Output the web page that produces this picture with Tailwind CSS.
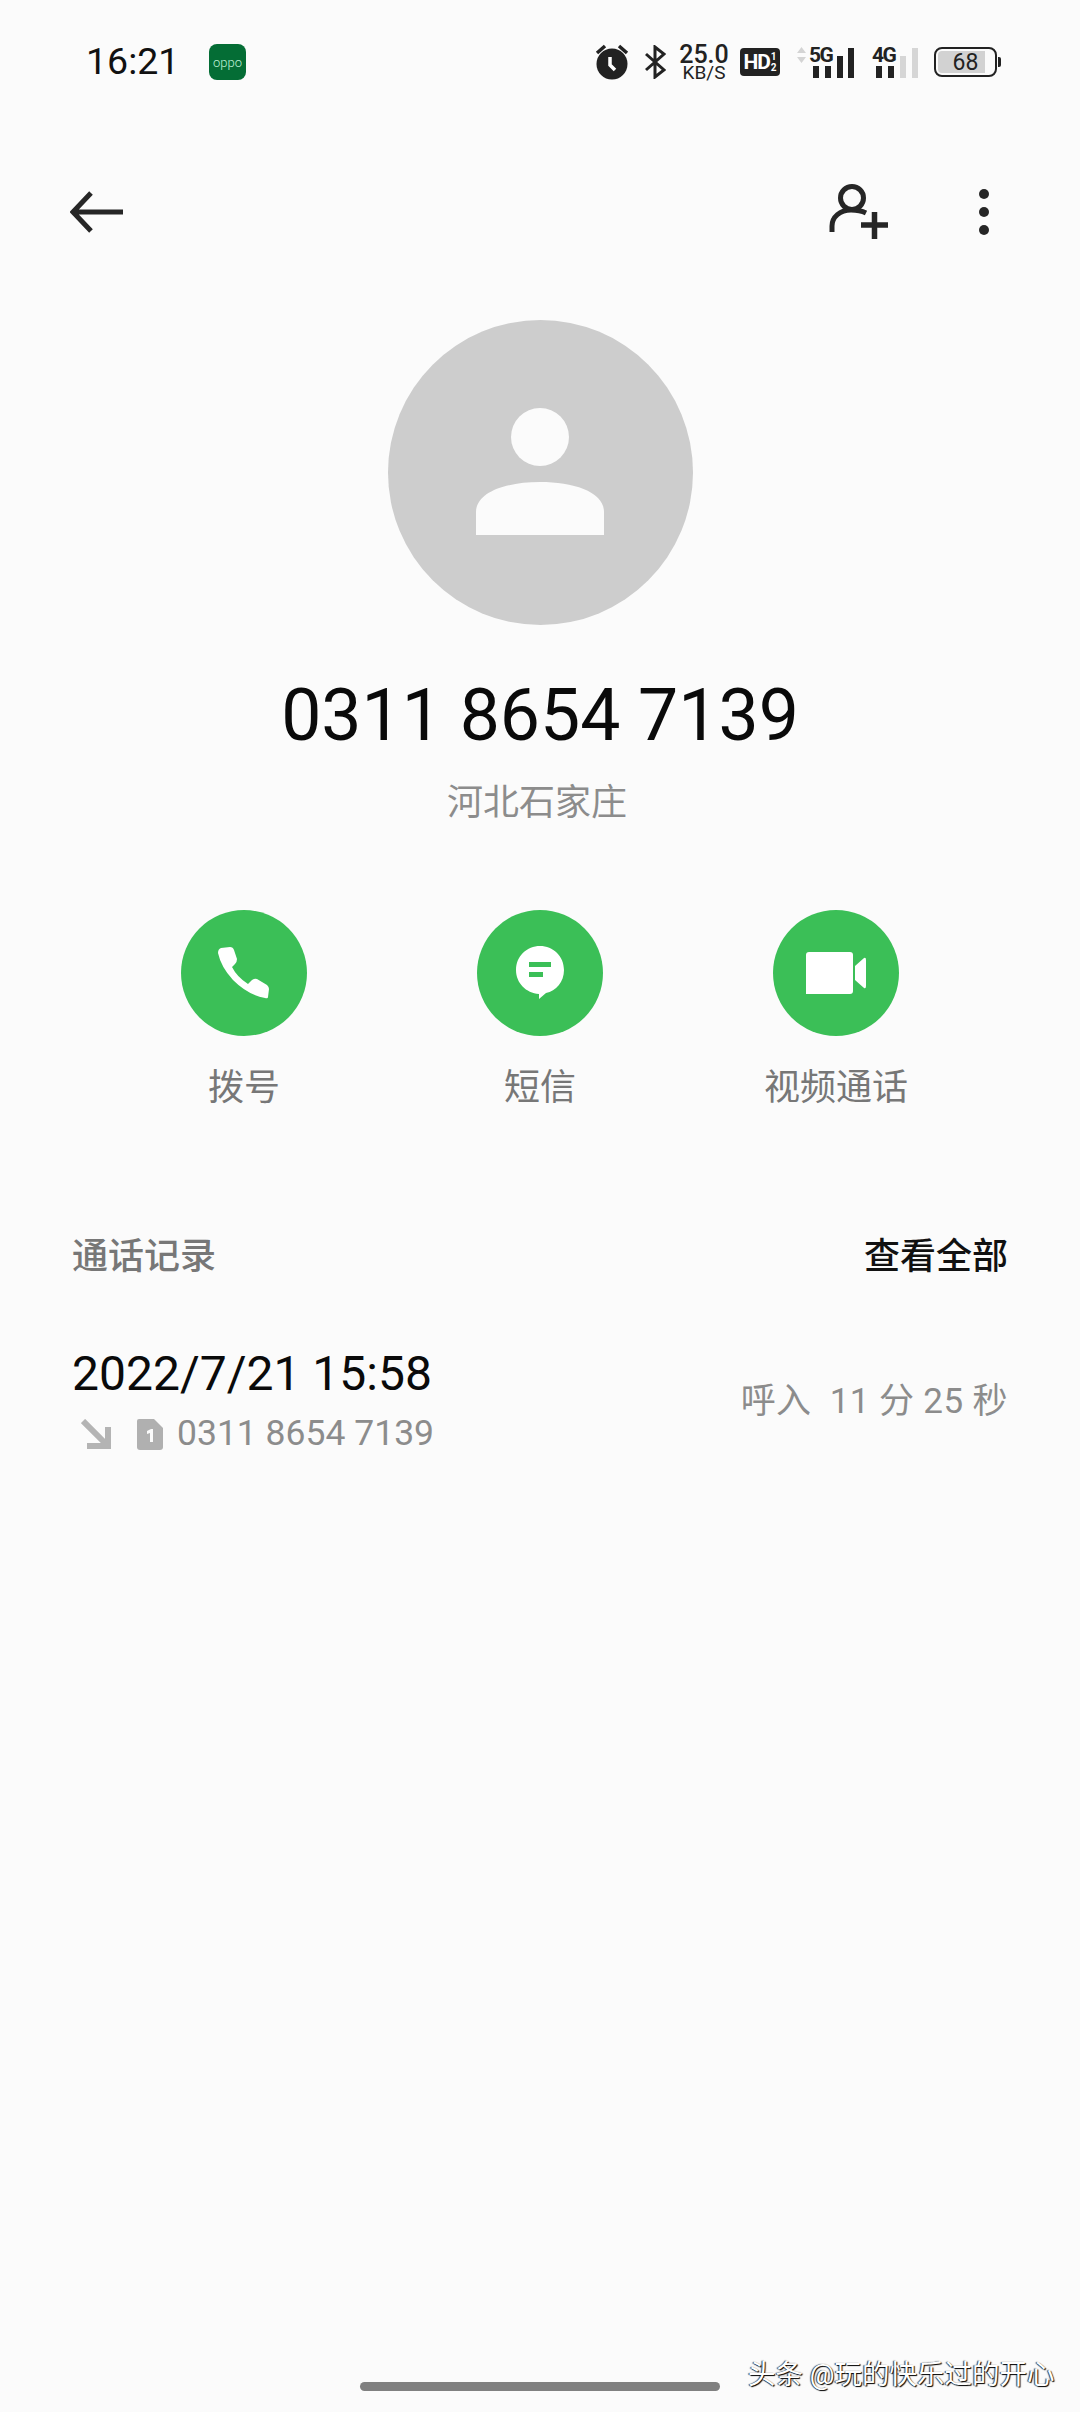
<!DOCTYPE html>
<html lang="zh-CN">
<head>
    <meta charset="UTF-8">
    <meta name="viewport" content="width=device-width, initial-scale=1.0">
    <title>通话详情</title>
    <script src="https://cdn.jsdelivr.net/npm/@tailwindcss/browser@4"></script>
</head>
<body class="bg-[#fbfbfb]">
    <div class="relative w-[1080px] h-[2412px] overflow-hidden bg-[#fbfbfb] font-['Roboto','Noto_Sans_CJK_SC',sans-serif]">
        <!-- Status bar -->
        <div class="flex items-center h-[124px] pl-[86px]">
            <span class="w-[123px] text-[37.500px] leading-none text-[#111]">16:21</span>
            <div class="flex items-center justify-center w-[37px] h-[36px] rounded-[8px] bg-[#046d35] text-[13px] font-light leading-none text-[#bff0d5]">oppo</div>
            <div class="ml-auto flex items-center h-[40px] mr-[79px] text-[#222]">
                <svg class="w-[34px] h-[36px]" viewBox="0 0 34 36">
                    <circle cx="17" cy="20" r="15.5" fill="#222"/>
                    <path d="M2 9l8-7M32 9l-8-7" stroke="#222" stroke-width="3.5" fill="none"/>
                    <path d="M15 13v8l5 5" stroke="#fff" stroke-width="3.5" fill="none"/>
                </svg>
                <svg class="ml-[15px] w-[22px] h-[34px]" viewBox="0 0 22 34">
                    <path d="M2 9l18 16-9 7V2l9 7L2 25" stroke="#222" stroke-width="3" fill="none"/>
                </svg>
                <div class="ml-[13px] flex flex-col items-center w-[50px]">
                    <span class="text-[25px] leading-[21px] font-medium">25.0</span>
                    <span class="text-[19px] leading-[15px]">KB/S</span>
                </div>
                <div class="ml-[11px] flex items-center justify-center w-[40px] h-[28px] rounded-[4px] bg-[#222] text-white">
                    <span class="text-[21px] leading-none font-bold tracking-[-1px]">HD</span>
                    <span class="flex flex-col text-[10px] leading-[11px] font-bold ml-[1px]"><span>1</span><span>2</span></span>
                </div>
                <svg class="ml-[17px] w-[9px] h-[16px] mb-[14px]" viewBox="0 0 9 16">
                    <path d="M4.500 0L9 6H0zM0 10h9l-4.500 6z" fill="#d4d4d4"/>
                </svg>
                <div class="relative ml-[3px] w-[46px] h-[32px]">
                    <span class="absolute left-0 -top-[1px] text-[21px] leading-none font-bold tracking-[-1.500px]">5G</span>
                    <span class="absolute left-[4px] bottom-0 w-[6px] h-[12px] bg-[#222]"></span>
                    <span class="absolute left-[16px] bottom-0 w-[6px] h-[12px] bg-[#222]"></span>
                    <span class="absolute left-[28px] bottom-0 w-[6px] h-[22px] bg-[#222]"></span>
                    <span class="absolute left-[39px] bottom-0 w-[6px] h-[30px] bg-[#222]"></span>
                </div>
                <div class="relative ml-[17px] w-[46px] h-[32px]">
                    <span class="absolute left-0 -top-[1px] text-[21px] leading-none font-bold tracking-[-1.500px]">4G</span>
                    <span class="absolute left-[4px] bottom-0 w-[6px] h-[12px] bg-[#222]"></span>
                    <span class="absolute left-[16px] bottom-0 w-[6px] h-[12px] bg-[#222]"></span>
                    <span class="absolute left-[28px] bottom-0 w-[6px] h-[22px] bg-[#d6d6d6]"></span>
                    <span class="absolute left-[40px] bottom-0 w-[6px] h-[30px] bg-[#d6d6d6]"></span>
                </div>
                <div class="ml-[16px] flex items-center justify-center w-[63px] h-[30px] rounded-[8px] border-[2.500px] border-[#222] p-[2px]">
                    <div class="flex items-center justify-center w-full h-full rounded-[4px] bg-gradient-to-r from-[#d2d2d2] from-[85%] to-transparent to-[85%] text-[23px] leading-none">68</div>
                </div>
                <span class="ml-[1px] w-[3px] h-[10px] bg-[#222] rounded-r-[2px]"></span>
            </div>
        </div>

        <!-- Toolbar -->
        <div class="flex items-center h-[176px] pl-[70px] pr-[91px]">
            <svg class="w-[54px] h-[42px]" viewBox="0 0 54 42">
                <path d="M53 21H3M21 2L3 21l18 19" stroke="#262626" stroke-width="5" fill="none"/>
            </svg>
            <svg class="ml-auto w-[60px] h-[56px]" viewBox="0 0 60 56">
                <circle cx="23" cy="14" r="11.500" stroke="#262626" stroke-width="5" fill="none"/>
                <path d="M3 48V42C3 33 11 26 22 26c6 0 11 1 15 3" stroke="#262626" stroke-width="5" fill="none"/>
                <path d="M32 41H59M45.500 28V55" stroke="#262626" stroke-width="5.500" fill="none"/>
            </svg>
            <div class="ml-[90px] flex flex-col gap-[8px]">
                <span class="w-[10px] h-[10px] rounded-full bg-[#262626]"></span>
                <span class="w-[10px] h-[10px] rounded-full bg-[#262626]"></span>
                <span class="w-[10px] h-[10px] rounded-full bg-[#262626]"></span>
            </div>
        </div>

        <!-- Avatar -->
        <div class="mt-[20px] mx-auto flex flex-col items-center w-[305px] h-[305px] rounded-full bg-[#cdcdcd]">
            <span class="mt-[88px] w-[58px] h-[58px] rounded-full bg-[#fbfbfb]"></span>
            <svg class="mt-[16px] w-[128px] h-[53px]" viewBox="0 0 128 53">
                <path d="M0 53V30C0 10 30 0 64 0s64 10 64 30v23z" fill="#fbfbfb"/>
            </svg>
        </div>

        <!-- Number -->
        <h1 class="mt-[46px] h-[90px] text-center text-[71.500px] leading-[90px] text-[#0a0a0a]">0311 8654 7139</h1>
        <p class="mt-[20px] h-[44px] pr-[6px] text-center text-[36px] leading-[44px] text-[#8c8c8c]">河北石家庄</p>

        <!-- Actions -->
        <div class="mt-[85px] flex justify-center">
            <div class="flex flex-col items-center w-[296px]">
                <div class="flex items-center justify-center w-[126px] h-[126px] rounded-full bg-[#3bbf57]">
                    <svg class="w-[52px] h-[52px]" viewBox="0 0 52 52">
                        <path d="M3 1L12 0Q15 0 16 3L19 12Q19 15 17 17L14 20Q19 30 30 37L34 33Q37 31 39 32L49 38Q51 40 51 42L50 50Q50 52 47 51Q30 48 15 33Q3 20 0 6Q0 2 3 1Z" fill="#fff"/>
                    </svg>
                </div>
                <span class="mt-[27px] h-[50px] text-[36px] leading-[50px] text-[#777]">拨号</span>
            </div>
            <div class="flex flex-col items-center w-[296px]">
                <div class="flex items-center justify-center w-[126px] h-[126px] rounded-full bg-[#3bbf57]">
                    <svg class="w-[48px] h-[54px]" viewBox="0 0 48 54">
                        <path d="M24 0C37 0 48 10 48 24c0 12-8 21-18 23l-7 6v-5C10 47 0 37 0 24 0 10 11 0 24 0z" fill="#fff"/>
                        <path d="M13 16h22v5H13zM13 26h14v5H13z" fill="#3bbf57"/>
                    </svg>
                </div>
                <span class="mt-[27px] h-[50px] text-[36px] leading-[50px] text-[#777]">短信</span>
            </div>
            <div class="flex flex-col items-center w-[296px]">
                <div class="flex items-center justify-center w-[126px] h-[126px] rounded-full bg-[#3bbf57]">
                    <svg class="w-[60px] h-[42px]" viewBox="0 0 60 42">
                        <path d="M3 0H44Q47 0 47 3V39Q47 42 44 42H0V3Q0 0 3 0Z" fill="#fff"/>
                        <path d="M49 14L58 6Q60 5 60 8V34Q60 37 58 36L49 28Z" fill="#fff"/>
                    </svg>
                </div>
                <span class="mt-[27px] h-[50px] text-[36px] leading-[50px] text-[#777]">视频通话</span>
            </div>
        </div>

        <!-- Call log -->
        <div class="mt-[119px] flex items-center justify-between h-[50px] pl-[72px] pr-[72px]">
            <span class="text-[36px] leading-none font-medium text-[#777]">通话记录</span>
            <span class="text-[36px] leading-none font-medium text-[#111]">查看全部</span>
        </div>
        <div class="mt-[62px] flex items-center justify-between pl-[72px] pr-[72px]">
            <div class="flex flex-col">
                <span class="h-[60px] text-[48px] leading-[60px] text-[#0a0a0a]">2022/7/21 15:58</span>
                <div class="mt-[8px] flex items-center h-[44px]">
                    <svg class="ml-[9px] w-[30px] h-[30px]" viewBox="0 0 30 30">
                        <path d="M2 2L26 26M27 8V27H6" stroke="#b4b4b4" stroke-width="6" fill="none"/>
                    </svg>
                    <svg class="ml-[26px] w-[26px] h-[31px]" viewBox="0 0 26 31">
                        <path d="M2 0H17L26 9V28Q26 31 23 31H3Q0 31 0 28V2Q0 0 2 0Z" fill="#b0b0b0"/>
                        <path d="M10 12l4-2h2v13h-3V14l-3 1z" fill="#fbfbfb"/>
                    </svg>
                    <span class="ml-[14px] text-[35.500px] leading-none text-[#8c8c8c]">0311 8654 7139</span>
                </div>
            </div>
            <span class="mt-[3px] text-[35px] leading-none text-[#8c8c8c] tracking-[0.400px] whitespace-pre">呼入  11 分 25 秒</span>
        </div>

        <!-- Home indicator and watermark, over the page -->
        <div class="absolute left-[360px] top-[2382px] w-[360px] h-[9px] rounded-full bg-[#808080]"></div>
        <div class="absolute left-[748px] top-[2358px] text-[27.500px] leading-[34px] text-white whitespace-nowrap [text-shadow:1px_1px_1px_#000,-1px_0_1px_#333]">头条 @玩的快乐过的开心</div>
    </div>
</body>
</html>
